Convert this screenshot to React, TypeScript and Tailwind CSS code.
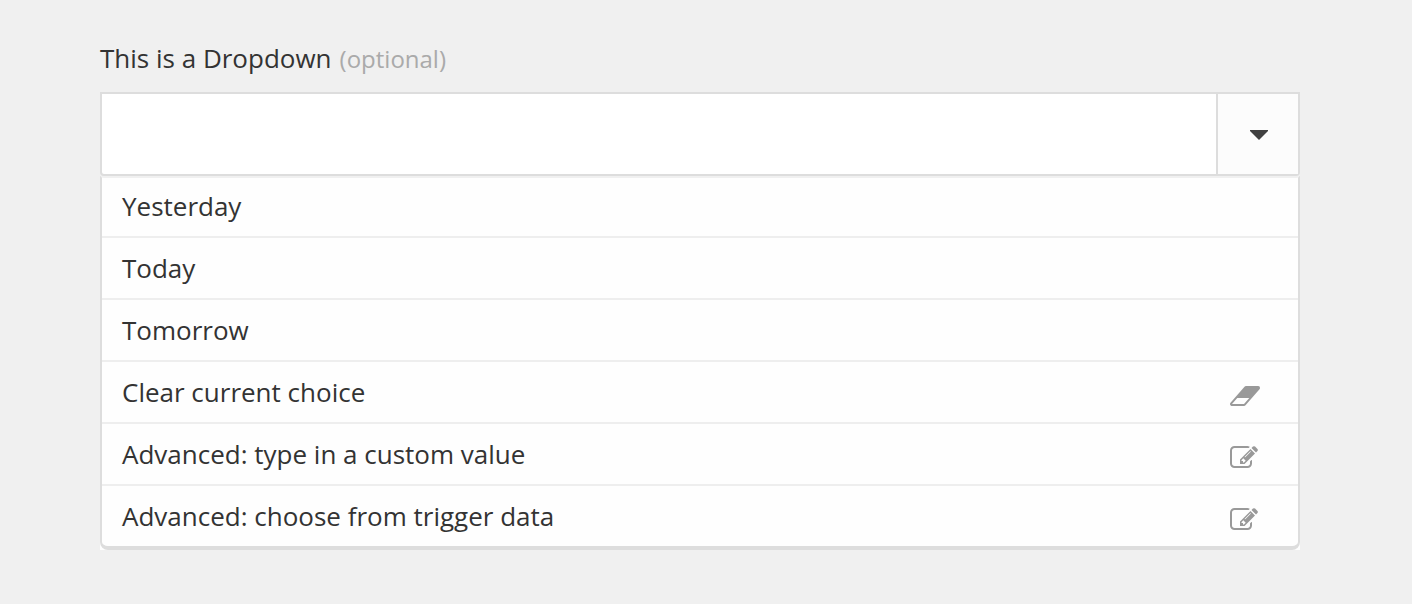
import { useState } from "react";

type IconName = "eraser" | "edit";

interface Option {
  label: string;
  icon?: IconName;
}

const OPTIONS: Option[] = [
  { label: "Yesterday" },
  { label: "Today" },
  { label: "Tomorrow" },
  { label: "Clear current choice", icon: "eraser" },
  { label: "Advanced: type in a custom value", icon: "edit" },
  { label: "Advanced: choose from trigger data", icon: "edit" },
];

function EraserIcon() {
  return (
    <svg viewBox="64 0 2048 1792" className="h-7 w-8" fill="currentColor" aria-hidden="true">
      <path d="M960 1408l336-384h-768l-336 384h768zm1013-1077q15 34 9.5 71.5t-30.5 65.5l-896 1024q-38 44-96 44h-768q-38 0-69.5-20.5t-47.5-54.5q-15-34-9.5-71.5t30.5-65.5l896-1024q38-44 96-44h768q38 0 69.5 20.5t47.5 54.5z" />
    </svg>
  );
}

function EditIcon() {
  return (
    <svg viewBox="0 0 1792 1792" className="h-7 w-7" fill="currentColor" aria-hidden="true">
      <path d="M888 1184l116-116-152-152-116 116v56h96v96h56zm440-720q-16-16-33 1l-350 350q-17 17-1 33t33-1l350-350q17-17 1-33zm80 594v190q0 119-84.5 203.5t-203.5 84.5h-832q-119 0-203.5-84.5t-84.5-203.5v-832q0-119 84.5-203.5t203.5-84.5h832q63 0 117 25 15 7 18 23 3 17-9 29l-49 49q-14 14-32 8-23-6-45-6h-832q-66 0-113 47t-47 113v832q0 66 47 113t113 47h832q66 0 113-47t47-113v-126q0-13 9-22l64-64q15-15 35-7t20 29zm-96-738l288 288-672 672h-288v-288zm444 132l-92 92-288-288 92-92q28-28 68-28t68 28l152 152q28 28 28 68t-28 68z" />
    </svg>
  );
}

export default function App() {
  const [value, setValue] = useState("");
  const [open, setOpen] = useState(true);

  const choose = (option: Option) => {
    setValue(option.icon ? "" : option.label);
  };

  return (
    <main className="min-h-screen bg-[#f0f0f0] pt-10 pr-28 pb-12 pl-[100px] font-['Open_Sans',sans-serif] text-[26px] text-[#333]">
      <div className="flex h-[52px] items-baseline gap-2 leading-9">
        <label htmlFor="dropdown">This is a Dropdown</label>
        <span className="text-2xl leading-9 text-[#aaa]">(optional)</span>
      </div>

      <div className="relative flex h-[84px] rounded-b-sm border-2 border-[#ddd] bg-white shadow-[0_2px_0_#f0f0f0]">
        <input
          id="dropdown"
          type="text"
          value={value}
          onChange={(e) => setValue(e.target.value)}
          className="min-w-0 flex-1 px-5 outline-none"
        />
        <button
          type="button"
          aria-label="Toggle options"
          aria-expanded={open}
          onClick={() => setOpen(!open)}
          className="flex w-[82px] items-center justify-center border-l-2 border-[#ddd] bg-[#fcfcfc] pt-0.5 pl-0.5"
        >
          <svg viewBox="0 0 18 10" className="h-[10px] w-[18px]" fill="#404040" aria-hidden="true">
            <path d="M0 0h18v1l-9 9-9-9z" />
          </svg>
        </button>
      </div>

      {open && (
        <div className="bg-[#fefefe]">
          <ul className="rounded-b-lg border-x-2 border-b-4 border-[#ddd]">
            {OPTIONS.map((option) => (
              <li key={option.label} className="border-b-2 border-[#eee] last:border-b-0">
                <button
                  type="button"
                  onClick={() => choose(option)}
                  className="flex h-[60px] w-full items-center justify-between pr-9 pl-5 text-left"
                >
                  <span>{option.label}</span>
                  {option.icon && (
                    <span className="w-8 pt-2 text-[#999]">
                      {option.icon === "eraser" ? <EraserIcon /> : <EditIcon />}
                    </span>
                  )}
                </button>
              </li>
            ))}
          </ul>
        </div>
      )}
    </main>
  );
}
